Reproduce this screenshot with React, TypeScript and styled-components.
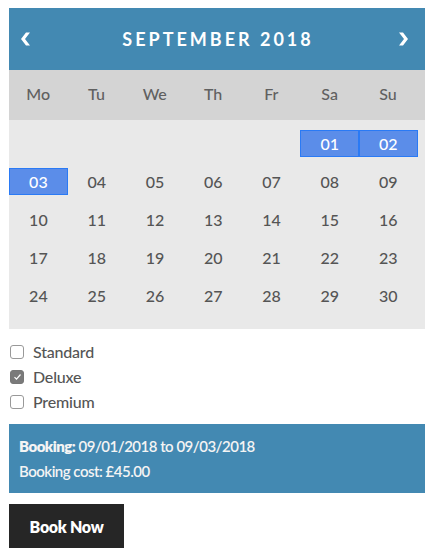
import React from "react";
import styled, { createGlobalStyle } from "styled-components";

const Global = createGlobalStyle`
  html, body { margin: 0; padding: 0; background: #fff; }
  body { font-family: Lato, "Open Sans", sans-serif; }
`;

const Page = styled.div`
  padding: 8px 8px 0 9px;
  width: 416px;
`;

const Calendar = styled.div`
  width: 416px;
`;

const Header = styled.div`
  height: 62px;
  background: #4389b2;
  display: flex;
  align-items: center;
  justify-content: space-between;
  padding: 0 16px 0 10px;
  box-sizing: border-box;
  color: #fff;
`;

const Arrow = styled.span`
  display: flex;
  width: 12px;
  justify-content: center;
  svg { display: block; }
`;

const Title = styled.div`
  font-size: 18px;
  font-weight: 700;
  letter-spacing: 3px;
  margin-top: -1px;
  margin-left: 8px;
`;

const DayNames = styled.div`
  height: 50px;
  background: #d4d4d4;
  display: grid;
  grid-template-columns: repeat(7, 58.3px);
  align-items: center;
  padding-bottom: 4px;
  box-sizing: border-box;
`;

const DayName = styled.div`
  text-align: center;
  font-size: 16px;
  font-weight: 500;
  color: #606060;
`;

const Body = styled.div`
  background: #e9e9e9;
  padding: 10px 0 20px;
  display: grid;
  grid-template-columns: repeat(7, 58.3px);
  grid-auto-rows: 27px;
  row-gap: 11px;
`;

const Cell = styled.div<{ $sel?: boolean }>`
  display: flex;
  align-items: center;
  justify-content: center;
  font-size: 16px;
  font-weight: 500;
  color: ${(p) => (p.$sel ? "#fff" : "#555")};
  background: ${(p) => (p.$sel ? "#5b8de9" : "transparent")};
  border: 1px solid ${(p) => (p.$sel ? "#2a7af5" : "transparent")};
  box-sizing: border-box;
  margin-right: -0.5px;
`;

const Options = styled.div`
  display: flex;
  flex-direction: column;
  padding: 13px 0 13px 1px;
  gap: 6px;
`;

const Option = styled.label`
  display: flex;
  align-items: center;
  gap: 9px;
  font-size: 16px;
  font-weight: 500;
  letter-spacing: -0.2px;
  color: #555;
  height: 19px;
`;

const Box = styled.span<{ $checked?: boolean }>`
  width: 12px;
  height: 12px;
  border-radius: 3px;
  border: 1px solid ${(p) => (p.$checked ? "#777" : "#999")};
  background: ${(p) => (p.$checked ? "#7a7a7a" : "#fff")};
  display: flex;
  align-items: center;
  justify-content: center;
`;

const Summary = styled.div`
  background: #4389b2;
  height: 69px;
  box-sizing: border-box;
  padding: 10px 10px 0;
  color: #f4f4f4;
  font-size: 15px;
  font-weight: 600;
  line-height: 25px;
  letter-spacing: -0.5px;
`;

const Strong = styled.b`
  font-weight: 800;
`;

const Button = styled.button`
  margin-top: 11px;
  width: 115px;
  height: 44px;
  background: #262626;
  color: #fff;
  border: 0;
  font-family: Lato, sans-serif;
  font-size: 16px;
  font-weight: 800;
  letter-spacing: -0.3px;
  padding: 0;
`;

const days = ["Mo", "Tu", "We", "Th", "Fr", "Sa", "Su"];

export default function App() {
  const cells: (number | null)[] = [null, null, null, null, null];
  for (let i = 1; i <= 30; i++) cells.push(i);
  const sel = [1, 2, 3];
  return (
    <Page>
      <Global />
      <Calendar>
        <Header>
          <Arrow>
            <svg width="11" height="14" viewBox="0 0 11 14">
              <path d="M6 0.5 L10 0.5 L5 7 L10 13.5 L6 13.5 L1 7 Z" fill="#fff" />
            </svg>
          </Arrow>
          <Title>SEPTEMBER 2018</Title>
          <Arrow>
            <svg width="11" height="14" viewBox="0 0 11 14">
              <path d="M5 0.5 L1 0.5 L6 7 L1 13.5 L5 13.5 L10 7 Z" fill="#fff" />
            </svg>
          </Arrow>
        </Header>
        <DayNames>
          {days.map((d) => (
            <DayName key={d}>{d}</DayName>
          ))}
        </DayNames>
        <Body>
          {cells.map((c, i) => (
            <Cell key={i} $sel={c !== null && sel.includes(c)}>
              {c === null ? "" : String(c).padStart(2, "0")}
            </Cell>
          ))}
        </Body>
      </Calendar>
      <Options>
        <Option>
          <Box />
          Standard
        </Option>
        <Option>
          <Box $checked>
            <svg width="9" height="8" viewBox="0 0 9 8">
              <path d="M1.5 4.2 L3.5 6.2 L7.5 1.5" fill="none" stroke="#fff" strokeWidth="1.2" />
            </svg>
          </Box>
          Deluxe
        </Option>
        <Option>
          <Box />
          Premium
        </Option>
      </Options>
      <Summary>
        <div>
          <Strong>Booking:</Strong> 09/01/2018 to 09/03/2018
        </div>
        <div>Booking cost: £45.00</div>
      </Summary>
      <Button>Book Now</Button>
    </Page>
  );
}
